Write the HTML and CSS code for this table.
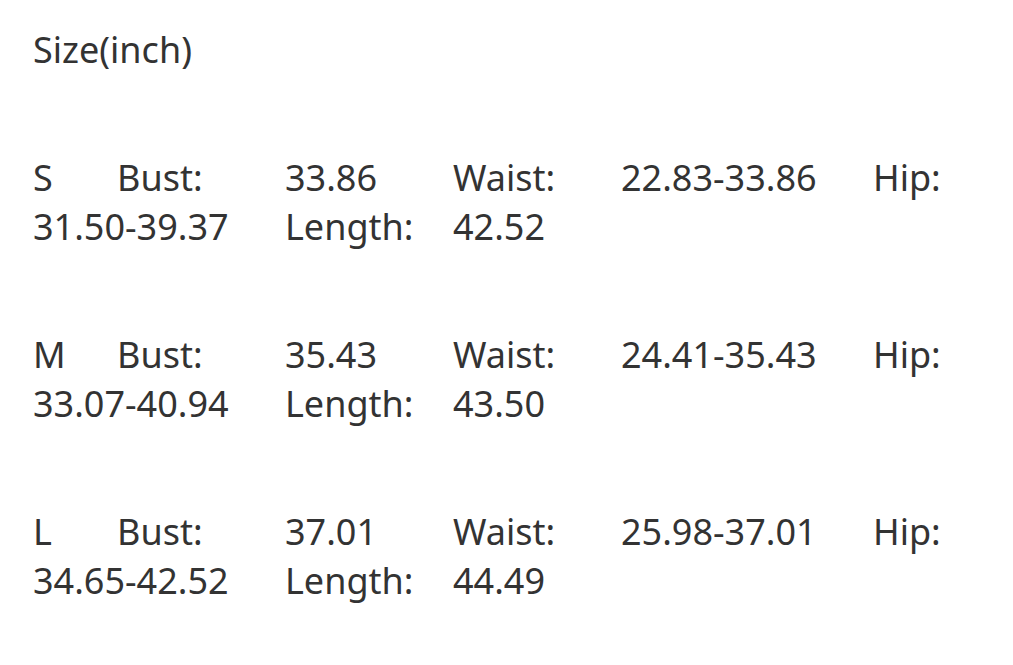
FILE: index.html
```html
<!DOCTYPE html>
<html>
<head>
<meta charset="utf-8">
<link rel="stylesheet" href="styles.css">
</head>
<body>
<div class="sheet">
<p class="title">Size(inch)</p>
<p class="row">S	Bust:	33.86	Waist:	<span class="val">22.83-33.86</span>	Hip:	<span class="val">31.50-39.37</span>	Length:	42.52</p>
<p class="row">M	Bust:	35.43	Waist:	<span class="val">24.41-35.43</span>	Hip:	<span class="val">33.07-40.94</span>	Length:	43.50</p>
<p class="row">L	Bust:	37.01	Waist:	<span class="val">25.98-37.01</span>	Hip:	<span class="val">34.65-42.52</span>	Length:	44.49</p>
</div>
</body>
</html>
```
FILE: styles.css
```css
html, body {
  margin: 0;
  background: #ffffff;
}
.sheet {
  padding: 25px 33px 0 33px;
  width: 947px;
  font-family: "Noto Sans", "Open Sans", sans-serif;
  font-size: 36px;
  line-height: 49px;
  color: #333333;
}
.sheet p {
  margin: 0 0 79px 0;
  white-space: pre-wrap;
  tab-size: 84px;
  -moz-tab-size: 84px;
}
.val {
  white-space: nowrap;
}
```
